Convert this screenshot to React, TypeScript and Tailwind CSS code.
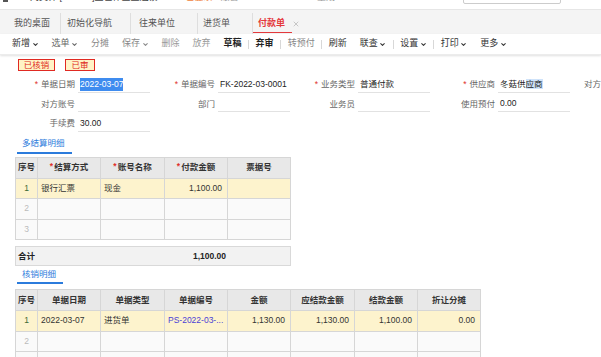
import React from 'react';
import { ChevronDown, X } from 'lucide-react';

type Field = { label: string; value?: string; req?: boolean; sel?: 'all' | 'tail' };

const formRows: Field[][] = [
  [
    { label: '单据日期', value: '2022-03-07', req: true, sel: 'all' },
    { label: '单据编号', value: 'FK-2022-03-0001', req: true },
    { label: '业务类型', value: '普通付款', req: true },
    { label: '供应商', value: '冬菇供应商', req: true, sel: 'tail' },
    { label: '对方银行账号' },
  ],
  [{ label: '对方账号' }, { label: '部门' }, { label: '业务员' }, { label: '使用预付', value: '0.00' }],
  [{ label: '手续费', value: '30.00' }],
];

const tools: { name: string; drop?: boolean; tone: string; sep?: boolean }[] = [
  { name: '新增', drop: true, tone: 'text-[#333]' },
  { name: '选单', drop: true, tone: 'text-[#666]' },
  { name: '分摊', tone: 'text-[#888]' },
  { name: '保存', drop: true, tone: 'text-[#888]' },
  { name: '删除', tone: 'text-[#999]' },
  { name: '放弃', tone: 'text-[#999]' },
  { name: '草稿', tone: 'text-[#222] font-bold', sep: true },
  { name: '弃审', tone: 'text-[#222] font-bold', sep: true },
  { name: '转预付', tone: 'text-[#888]', sep: true },
  { name: '刷新', tone: 'text-[#333]' },
  { name: '联查', drop: true, tone: 'text-[#333]', sep: true },
  { name: '设置', drop: true, tone: 'text-[#333]', sep: true },
  { name: '打印', drop: true, tone: 'text-[#333]' },
  { name: '更多', drop: true, tone: 'text-[#333]' },
];

const tabs = [
  { name: '我的桌面', w: 'w-[55px] pl-[9px]' },
  { name: '初始化导航', w: 'w-[70px] pl-[6px]' },
  { name: '往来单位', w: 'w-[67px] pl-[8px]' },
  { name: '进货单', w: 'w-[55px] pl-[5px]' },
];

type Col = { title: string; w: string; req?: boolean; align?: 'right' | 'left' };

function Grid({ cols, first }: { cols: Col[]; first: React.ReactNode[] }) {
  return (
    <div className="border border-[#d6d6d6] w-fit">
      <div className="flex bg-[#e8e8e8] h-[20px]">
        <div className="w-[21px] shrink-0 flex items-center justify-center font-bold text-[#333]">序号</div>
        {cols.map((c) => (
          <div key={c.title} className={`${c.w} shrink-0 border-l border-[#d6d6d6] flex items-center justify-center font-bold text-[#333]`}>
            {c.req && <span className="text-[#e0302a] mr-[1px] -mt-[3px]">*</span>}
            {c.title}
          </div>
        ))}
      </div>
      {[1, 2, 3].map((n) => (
        <div key={n} className={`flex h-[20.5px] border-t border-[#d6d6d6] ${n === 1 ? 'bg-[#fdf3cd]' : 'bg-[#fafafa]'}`}>
          <div className={`w-[21px] shrink-0 flex items-center justify-center ${n === 1 ? 'text-[#3f6b34]' : 'text-[#bbb]'}`}>{n}</div>
          {cols.map((c, i) => (
            <div
              key={c.title}
              className={`${c.w} shrink-0 border-l border-[#d6d6d6] flex items-center px-[3px] pr-[5px] whitespace-nowrap overflow-hidden ${c.align === 'right' ? 'justify-end' : ''}`}
            >
              {n === 1 ? first[i] : null}
            </div>
          ))}
        </div>
      ))}
    </div>
  );
}

function Section({ title, w }: { title: string; w: string }) {
  return (
    <div className="pl-[17px]">
      <div className={`${w} h-[18px] pl-[5px] flex items-center text-[#2b7bdc] border-b-2 border-[#2b7bdc]`}>{title}</div>
    </div>
  );
}

export default function App() {
  return (
    <div className="w-[601px] h-[357px] overflow-hidden bg-white text-[8.5px] text-[#333] font-['Liberation_Sans','Noto_Sans_CJK_SC',sans-serif]">
      {/* header strip, scrolled mostly out of view */}
      <div className="h-[10px] overflow-hidden border-b border-[#e6e6e6]">
        <div className="flex items-center -mt-[8px] h-[12px] text-[9px] whitespace-nowrap">
          <div className="ml-[3px] w-[5px] h-[8px] bg-[#555]" />
          <span className="ml-[22px] text-[#444]">刘文锋 [888888]王世伟企业连锁</span>
          <span className="ml-[20px] text-[#f07f3c]">● 已登录</span>
          <span className="ml-[8px] text-[#999]">账套 01</span>
          <span className="ml-[12px] text-[#999]">2022-03-07 · 星期一 09:30</span>
          <div className="ml-[94px] w-[98px] h-[12px] border border-[#ccc] rounded-[2px] bg-white" />
        </div>
      </div>

      {/* tabs */}
      <div className="h-[24px] bg-[#f4f4f4] flex items-stretch pl-[5px] pt-[3px] text-[9px]">
        {tabs.map((t, i) => (
          <div key={t.name} className={`${t.w} flex items-center text-[#555] ${i > 0 ? 'border-l border-[#dedede]' : ''}`}>
            <span className="whitespace-nowrap">{t.name}</span>
          </div>
        ))}
        <div className="flex items-center border-l border-[#dedede] pl-[5px] relative">
          <span className="text-[#e4393c] font-bold">付款单</span>
          <X className="ml-[7px] w-[8px] h-[8px] text-[#999]" strokeWidth={1.5} />
          <div className="absolute left-0 bottom-[1px] w-[39px] h-[1.5px] bg-[#e4393c]" />
        </div>
      </div>

      {/* toolbar */}
      <div className="h-[21px] flex items-center pl-[5.5px] text-[9px] shadow-[0_1px_2px_rgba(0,0,0,0.12)] border-b border-[#ececec]">
        {tools.map((t) => (
          <React.Fragment key={t.name}>
            <div className={`flex items-center px-[6.5px] whitespace-nowrap ${t.tone}`}>
              {t.name}
              {t.drop && <ChevronDown className="ml-[1.5px] w-[7px] h-[7px]" strokeWidth={3.5} />}
            </div>
            {t.sep && <div className="w-px h-[9px] bg-[#d8d8d8]" />}
          </React.Fragment>
        ))}
      </div>

      {/* status stamps */}
      <div className="flex gap-[10px] pl-[18px] mt-[4px]">
        <div className="w-[37px] h-[12px] border border-[#e02a22] bg-[#fff3c6] text-[#e02a22] flex items-center justify-center">已核销</div>
        <div className="w-[30px] h-[12px] border border-[#e02a22] bg-[#fff3c6] text-[#e02a22] flex items-center justify-center">已审</div>
      </div>

      {/* form */}
      <div className="mt-[4px] pl-[13px]">
        {formRows.map((row, ri) => (
          <div key={ri} className="flex h-[19.5px] items-center whitespace-nowrap">
            {row.map((f) => (
              <div key={f.label} className="w-[140px] shrink-0 flex items-center">
                <div className="w-[62px] text-right text-[#666]">
                  {f.req && <span className="text-[#e0302a] mr-[3px]">*</span>}
                  {f.label}
                </div>
                <div className="ml-[3px] w-[72px] h-[16px] border-b border-[#e2e2e2] flex items-center pl-[2px] text-[#222]">
                  {f.sel === 'all' ? (
                    <span className="bg-[#3f8cef] text-white">{f.value}</span>
                  ) : f.sel === 'tail' ? (
                    <span>
                      冬菇供<span className="bg-[#cfe3fa]">应商</span>
                    </span>
                  ) : (
                    f.value
                  )}
                </div>
              </div>
            ))}
          </div>
        ))}
      </div>

      <div className="mt-[2px]">
        <Section title="多结算明细" w="w-[55px]" />
      </div>

      <div className="pl-[15px] mt-[3px]">
        <Grid
          cols={[
            { title: '结算方式', w: 'w-[63px]', req: true },
            { title: '账号名称', w: 'w-[64px]', req: true },
            { title: '付款金额', w: 'w-[63px]', req: true, align: 'right' },
            { title: '票据号', w: 'w-[63px]' },
          ]}
          first={['银行汇票', '现金', '1,100.00', '']}
        />
        <div className="mt-[6px] w-[276px] h-[20px] border border-[#d9d9d9] bg-[#f2f2f2] flex items-center font-bold text-[#222]">
          <span className="pl-[2px]">合计</span>
          <span className="ml-auto mr-[64px]">1,100.00</span>
        </div>
      </div>

      <div className="mt-[0px]">
        <Section title="核销明细" w="w-[46px]" />
      </div>

      <div className="pl-[15px] mt-[5px]">
        <Grid
          cols={[
            { title: '单据日期', w: 'w-[63px]' },
            { title: '单据类型', w: 'w-[64px]' },
            { title: '单据编号', w: 'w-[63px]' },
            { title: '金额', w: 'w-[63px]', align: 'right' },
            { title: '应结款金额', w: 'w-[64px]', align: 'right' },
            { title: '结款金额', w: 'w-[63px]', align: 'right' },
            { title: '折让分摊', w: 'w-[63px]', align: 'right' },
          ]}
          first={[
            '2022-03-07',
            '进货单',
            <span className="text-[#4a3fd6]">PS-2022-03-...</span>,
            '1,130.00',
            '1,130.00',
            '1,100.00',
            '0.00',
          ]}
        />
      </div>
    </div>
  );
}
